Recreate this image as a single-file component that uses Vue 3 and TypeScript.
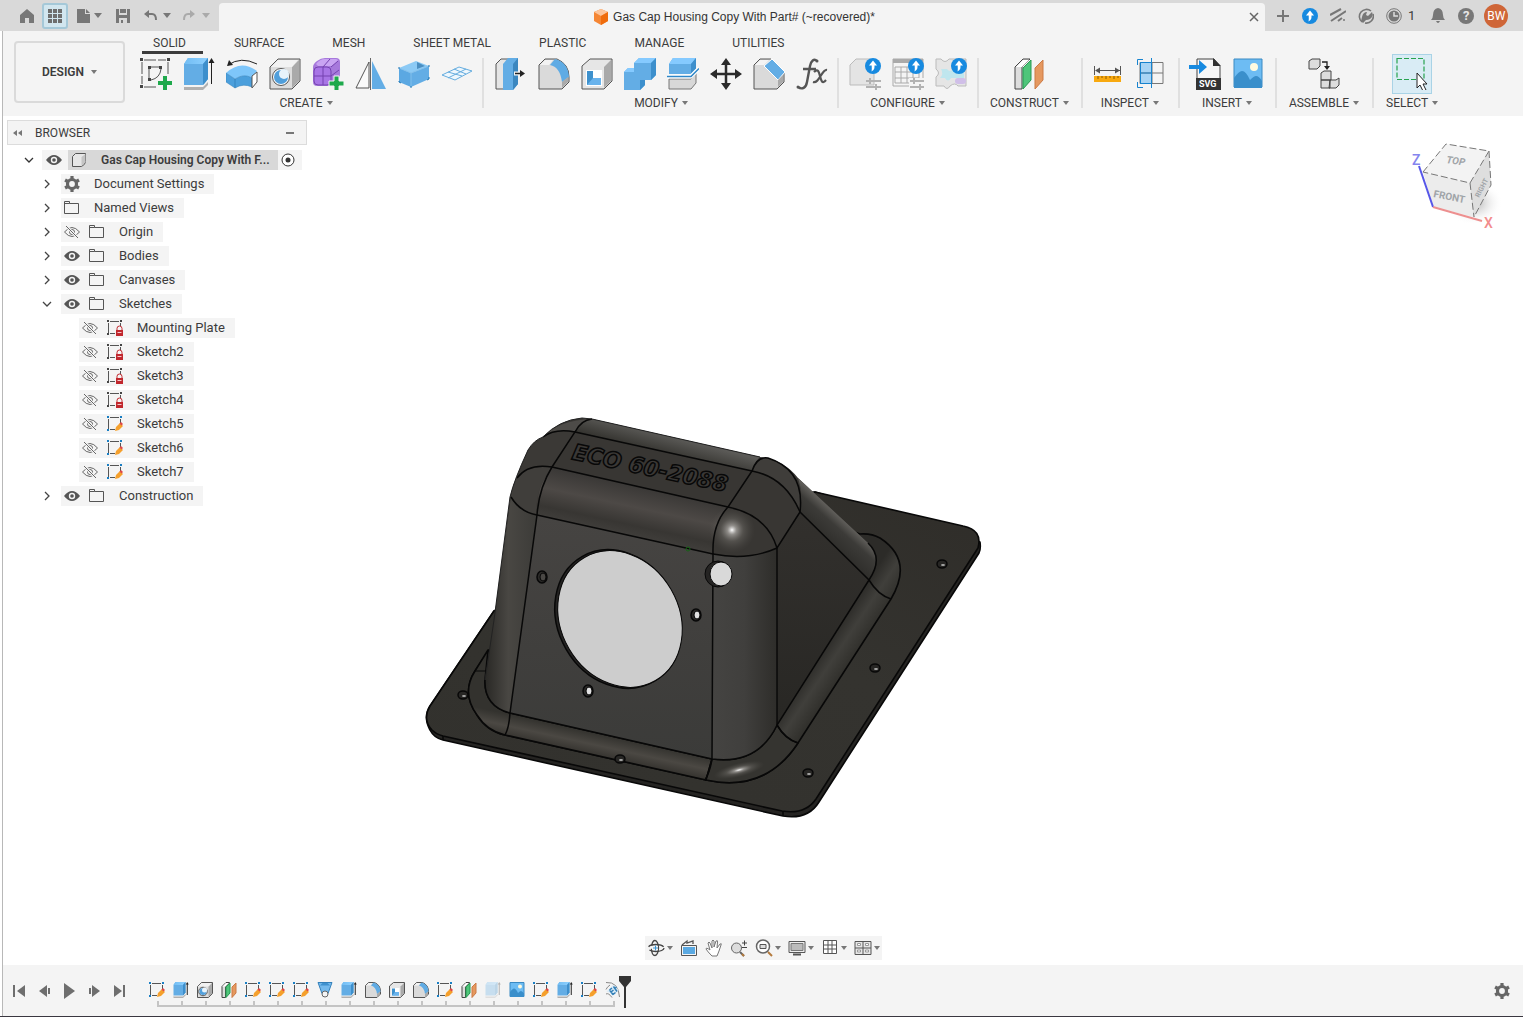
<script setup lang="ts">
import { ref } from 'vue'

interface Group { name: string; icons: string[]; cls: string }
interface Node { label: string; level: number; icon: string; eye: '' | 'eye' | 'eye-off'; open?: boolean }

const tabs = ['SOLID', 'SURFACE', 'MESH', 'SHEET METAL', 'PLASTIC', 'MANAGE', 'UTILITIES']
const activeTab = ref('SOLID')

const groups: Group[] = [
  { name: 'CREATE', cls: 'wide', icons: ['sketch', 'extrude', 'revolve', 'hole', 'form', 'mirror', 'derive', 'pattern'] },
  { name: 'MODIFY', cls: 'wide', icons: ['presspull', 'fillet', 'shell', 'combine', 'split', 'move', 'chamfer', 'fx'] },
  { name: 'CONFIGURE', cls: '', icons: ['config-body', 'config-table', 'config-theme'] },
  { name: 'CONSTRUCT', cls: '', icons: ['plane'] },
  { name: 'INSPECT', cls: '', icons: ['measure', 'section'] },
  { name: 'INSERT', cls: '', icons: ['svg-insert', 'canvas'] },
  { name: 'ASSEMBLE', cls: 'roomy', icons: ['assemble'] },
  { name: 'SELECT', cls: 'roomy select', icons: ['select'] },
]

const nodes: Node[] = [
  { label: 'Document Settings', level: 1, icon: 'gear', eye: '' },
  { label: 'Named Views', level: 1, icon: 'folder', eye: '' },
  { label: 'Origin', level: 1, icon: 'folder', eye: 'eye-off' },
  { label: 'Bodies', level: 1, icon: 'folder', eye: 'eye' },
  { label: 'Canvases', level: 1, icon: 'folder', eye: 'eye' },
  { label: 'Sketches', level: 1, icon: 'folder', eye: 'eye', open: true },
  { label: 'Mounting Plate', level: 2, icon: 'sketch-lock', eye: 'eye-off' },
  { label: 'Sketch2', level: 2, icon: 'sketch-lock', eye: 'eye-off' },
  { label: 'Sketch3', level: 2, icon: 'sketch-lock', eye: 'eye-off' },
  { label: 'Sketch4', level: 2, icon: 'sketch-lock', eye: 'eye-off' },
  { label: 'Sketch5', level: 2, icon: 'sketch-edit', eye: 'eye-off' },
  { label: 'Sketch6', level: 2, icon: 'sketch-edit', eye: 'eye-off' },
  { label: 'Sketch7', level: 2, icon: 'sketch-edit', eye: 'eye-off' },
  { label: 'Construction', level: 1, icon: 'folder', eye: 'eye' },
]

const navTools = [
  { icon: 'orbit', menu: true }, { icon: 'lookat', menu: false }, { icon: 'pan', menu: false },
  { icon: 'zoom', menu: false }, { icon: 'fit', menu: true }, { icon: 'display', menu: true },
  { icon: 'grid', menu: true }, { icon: 'views', menu: true },
]

const playback = ['first', 'prev', 'play', 'next', 'last']
const history = [
  'sketch-edit', 'extrude', 'hole', 'plane', 'sketch-edit', 'sketch-edit', 'sketch-edit', 'loft', 'extrude', 'fillet',
  'shell', 'fillet', 'sketch-edit', 'plane', 'extrude', 'canvas', 'sketch-edit', 'extrude', 'sketch-edit', 'emboss',
]
const suppressed = 14
const plateHoles = [[463, 695], [620, 759], [808, 773], [875, 668], [942, 564]]
const faceHoles = [[542, 577], [696, 615], [588, 691]]
</script>

<template>
  <div class="app">
    <svg class="defs" width="0" height="0" aria-hidden="true">
      <defs>
        <linearGradient id="gCorner" x1="0" x2="1"><stop offset="0" stop-color="#454442" /><stop offset=".5" stop-color="#403f3d" /><stop offset="1" stop-color="#2e2d2a" /></linearGradient>
        <linearGradient id="gLeft" x1="0" x2="1"><stop offset="0" stop-color="#292825" /><stop offset=".45" stop-color="#494743" /><stop offset="1" stop-color="#3c3b38" /></linearGradient>
        <linearGradient id="gFront" x1="0" y1="0" x2="0" y2="1"><stop offset="0" stop-color="#464442" /><stop offset="1" stop-color="#3b3b39" /></linearGradient>
        <linearGradient id="gEdge" gradientUnits="userSpaceOnUse" x1="640" y1="487" x2="629" y2="538"><stop offset="0" stop-color="#3a3836" /><stop offset=".4" stop-color="#4d4946" /><stop offset=".75" stop-color="#383633" /><stop offset="1" stop-color="#413f3c" /></linearGradient>
        <linearGradient id="gBack" gradientUnits="userSpaceOnUse" x1="670" y1="436" x2="665" y2="455"><stop offset="0" stop-color="#5b5a57" /><stop offset="1" stop-color="#34332f" /></linearGradient>
        <linearGradient id="gRing" gradientUnits="userSpaceOnUse" x1="614" y1="737" x2="609" y2="760"><stop offset="0" stop-color="#33322e" /><stop offset=".5" stop-color="#4b4843" /><stop offset="1" stop-color="#33312d" /></linearGradient>
        <linearGradient id="gRingR" gradientUnits="userSpaceOnUse" x1="815" y1="660" x2="845" y2="680"><stop offset="0" stop-color="#2c2b28" /><stop offset=".4" stop-color="#403f3b" /><stop offset="1" stop-color="#2c2b27" /></linearGradient>
        <linearGradient id="gSlope" gradientUnits="userSpaceOnUse" x1="827" y1="540" x2="845" y2="520"><stop offset="0" stop-color="#302f2c" /><stop offset=".6" stop-color="#3c3b38" /><stop offset="1" stop-color="#64625e" /></linearGradient>
        <linearGradient id="gSide" x1="0" y1="0" x2="0" y2="1"><stop offset="0" stop-color="#32302d" /><stop offset="1" stop-color="#282724" /></linearGradient>
        <linearGradient id="gPlate" x1="0" y1="1" x2="1" y2="0"><stop offset="0" stop-color="#32312d" /><stop offset=".6" stop-color="#34332f" /><stop offset="1" stop-color="#2f2d29" /></linearGradient>
        <radialGradient id="gSpec"><stop offset="0" stop-color="#fff" /><stop offset=".2" stop-color="#b5b2ae" stop-opacity=".7" /><stop offset=".5" stop-color="#7a7772" stop-opacity=".4" /><stop offset="1" stop-color="#55524e" stop-opacity="0" /></radialGradient>
        <radialGradient id="gShadow"><stop offset="0" stop-color="#999" stop-opacity=".8" /><stop offset="1" stop-color="#fff" stop-opacity="0" /></radialGradient>
        <linearGradient id="gBlueTop" x1="0" x2="1"><stop offset="0" stop-color="#72bdf3" /><stop offset="1" stop-color="#8dd0ff" /></linearGradient>
      </defs>

      <symbol id="i-sketch" viewBox="0 0 32 32"><path d="M2 4v22M4 2h22M28 4v13M4 29h12" fill="none" stroke="#555" stroke-dasharray="12 2" /><path d="M9 9h12M9 9v13M21 11q-1 9-10 11" fill="none" stroke="#555" /><path d="M0 0h3v3H0zM27 0h3v3h-3zM0 27h3v3H0zM8 8h3v3H8zM19 8h3v3h-3zM8 20h3v3H8z" fill="#444" /><path d="M23 18h4v5h5v4h-5v5h-4v-5h-5v-4h5z" fill="#1fa94c" /></symbol>
      <symbol id="i-extrude" viewBox="0 0 32 32"><path d="M1 32v-4l5-5h19v4l-5 5z" fill="#b0b0b0" /><path d="M1 26h20l4-5v3l-5 5H1z" fill="#f4f4f4" /><path d="M1 6l4-6h20v21l-5 6H1z" fill="#63ade5" /><path d="M1 6l4-6h20l-5 6z" fill="url(#gBlueTop)" /><path d="M20 6l5-6v21l-5 6z" fill="#3d8fcc" /><path d="M28.500 4v22" stroke="#222" /><path d="M28.500 0l3 5h-6z" fill="#222" /></symbol>
      <symbol id="i-revolve" viewBox="0 0 32 32"><path d="M0 15q15-14 31-2l-5 7q-9-5-17 1z" fill="#7ec6fa" /><path d="M0 15l9 6v9l-9-6zM9 21q9-6 17-1v9q-9-4-17 1z" fill="#4b9fdc" stroke="#3380bb" stroke-width=".5" /><path d="M26 18l5-4v10l-5 6z" fill="#fff" stroke="#555" /><path d="M2 7q13-9 29-1" fill="none" stroke="#222" /><path d="M1 8l2-6 4 5z" fill="#222" /></symbol>
      <symbol id="i-hole" viewBox="0 0 32 32"><path d="M1 9l8-8h22v22l-8 8H1z" fill="#ddd" stroke="#555" /><path d="M23 9l7-7v21l-7 7z" fill="#aaa" /><path d="M2 9l7-7h20l-6 7z" fill="#f2f2f2" /><circle cx="12" cy="19" r="8.500" fill="#fff" stroke="#555" /><circle cx="12" cy="19" r="7" fill="#519fdb" /><circle cx="15" cy="16" r="5" fill="#e8f3fb" /></symbol>
      <symbol id="i-form" viewBox="0 0 32 32"><path d="M1 9q0-3 4-6t8-3h11q4 0 4 4v12q0 4-4 8t-8 4H5q-4 0-4-4z" fill="#a779dc" /><path d="M4 6q4-5 9-5h11q2 0 2 2l-6 5H6z" fill="#c9a4f2" /><rect x="2" y="9" width="17" height="18" rx="4" fill="#a875e6" stroke="#7543b0" /><path d="M11 9v18M2 18h17M11 9l7-8M19 18l8-6M19 9l7-6" fill="none" stroke="#7543b0" /><path d="M22 18h5v5h5v5h-5v5h-5v-5h-5v-5h5z" fill="#1fa94c" stroke="#f4f4f4" /></symbol>
      <symbol id="i-mirror" viewBox="0 0 32 32"><path d="M14 4v26H1z" fill="#fafafa" stroke="#555" /><path d="M17 3v28h14z" fill="#63ade5" /><path d="M15.500 0v32" stroke="#666" /></symbol>
      <symbol id="i-derive" viewBox="0 0 32 32"><path d="M1 10L18 3l13 5-18 7z" fill="#8ccaf5" /><path d="M19 4v7l8-3z" fill="#4b8fc2" /><path d="M1 10l12 5v14L1 24z" fill="#5ba8e2" /><path d="M13 15l18-7v13l-18 8z" fill="#63ade5" /><path d="M1 10l12 5v14M13 15l18-7" fill="none" stroke="#82c0ec" /><path d="M1 23v1l2 1M31 19v2l-2 1M12 29h2M0 10h2M30 8h2" stroke="#1f76b5" fill="none" /></symbol>
      <symbol id="i-pattern" viewBox="0 0 32 32"><path d="M1 17L18 9l13 4-17 9zM7 14l14 4M13 11l12 5M7 20L25 11M20 19" fill="#eef7fd" stroke="#66addf" /></symbol>
      <symbol id="i-presspull" viewBox="0 0 32 32"><path d="M1 6l5-5h8v25l-5 5H1z" fill="#e5e5e5" stroke="#555" /><path d="M8 6l5-6h10v26l-5 6H8z" fill="#63ade5" /><path d="M18 6l5-6v26l-5 6z" fill="#3b87c0" /><path d="M19 15.500h8" stroke="#f4f4f4" stroke-width="4" /><path d="M20 15.500h7" stroke="#222" stroke-width="1.500" /><path d="M25 12l5 3.500-5 3.500z" fill="#222" /></symbol>
      <symbol id="i-fillet" viewBox="0 0 32 32"><path d="M1 7l6-6h12q12 5 12 18v5l-7 7H1z" fill="#dadada" stroke="#555" /><path d="M12 7l5-6q13 3 14 18l-7 5Q22 9 12 7z" fill="#5fabe4" /><path d="M24 24l6-5v5l-6 6z" fill="#aaa" /><path d="M2 7l5-5h8l-4 5z" fill="#f2f2f2" /></symbol>
      <symbol id="i-shell" viewBox="0 0 32 32"><path d="M1 8l8-7h22v22l-8 8H1z" fill="#e6e6e6" stroke="#555" /><path d="M23 9l7-7v21l-7 7z" fill="#aaa" /><path d="M5 12h16v16H5z" fill="#fff" /><path d="M6 13v14h14l-5-7h-3v-7z" fill="#3e91cd" /><path d="M12 20h8v7h-8z" fill="#9fd2f7" /><path d="M6 27l6-7h8v7z" fill="#69b3ec" /></symbol>
      <symbol id="i-combine" viewBox="0 0 32 32"><path d="M0 32V14l4-4h6V5l5-5h17v17l-5 5h-6v5l-5 5z" fill="#63ade5" /><path d="M10 5l5-5h17l-5 5zM0 14l4-4h6v4z" fill="#85caff" /><path d="M27 5l5-5v17l-5 5zM16 22h5v5l-5 5z" fill="#3d8fcc" /></symbol>
      <symbol id="i-split" viewBox="0 0 32 32"><path d="M2 6l4-6h23v10l-5 6H2z" fill="#63ade5" /><path d="M2 6l4-6h23l-5 6z" fill="#85caff" /><path d="M24 6l5-6v11l-5 5z" fill="#3d8fcc" /><path d="M2 21h22l5-6v10l-5 6H2z" fill="#d8d8d8" stroke="#777" /><path d="M0 18.500h24l8-8" stroke="#fff" stroke-width="4" fill="none" /><path d="M0 18.500h24l8-8" stroke="#2e86c7" fill="none" stroke-width="1.500" /></symbol>
      <symbol id="i-move" viewBox="0 0 32 32"><path d="M16 4v24M4 16h24" stroke="#2b2b2b" stroke-width="2.500" /><path d="M16 0l5 7H11zM16 32l5-7H11zM0 16l7-5v10zM32 16l-7-5v10z" fill="#2b2b2b" /></symbol>
      <symbol id="i-chamfer" viewBox="0 0 32 32"><path d="M1 7l6-6h11l13 14v9l-7 7H1z" fill="#dadada" stroke="#555" /><path d="M11 8l8-7 13 13-7 8z" fill="#63ade5" stroke="#fff" /><path d="M25 22l5-5v7l-5 5z" fill="#aaa" /><path d="M2 7l5-5h9l-5 5z" fill="#f4f4f4" /></symbol>
      <symbol id="i-fx" viewBox="0 0 32 32"><path d="M21 3c-3-3-6 0-7 5l-3 16c-1 6-5 8-9 5M7 11h13" fill="none" stroke="#555" stroke-width="2.400" /><circle cx="21" cy="3" r="1.500" fill="#555" /><circle cx="2" cy="29" r="1.500" fill="#555" /><path d="M18 14c4-4 5 0 6 4s2 9 6 4M31 12c-5-1-8 14-14 12" fill="none" stroke="#555" stroke-width="2.200" /></symbol>
      <symbol id="i-badge" viewBox="0 0 16 16"><circle cx="8" cy="8" r="8" fill="#178ae0" /><path d="M8 2.500l4 5H9.500c0 3 0 4-3 6 .5-2 .2-4 .2-6H4z" fill="#fff" /></symbol>
      <symbol id="i-config-body" viewBox="0 0 32 32"><path d="M1 7l6-6h14l4 9v17H1z" fill="#e4e4e4" stroke="#bbb" /><path d="M17 23h15M17 29h15M21 20v6M27 26v6" stroke="#b2b2b2" stroke-width="2" /><use href="#i-badge" x="16" y="0" width="16" height="16" /></symbol>
      <symbol id="i-config-table" viewBox="0 0 32 32"><path d="M1 1h30v4H1z" fill="#aaa" /><path d="M1 1h30v27H1zM3 9h24v16H3zM3 14h24M3 20h24M9 9v16M15 9v16M21 9v16" fill="none" stroke="#aaa" /><path d="M17 20h15v10H17z" fill="#f4f4f4" /><path d="M18 23h14M18 29h14M22 20v6M28 26v6" stroke="#b2b2b2" stroke-width="2" /><use href="#i-badge" x="16" y="0" width="16" height="16" /></symbol>
      <symbol id="i-config-theme" viewBox="0 0 32 32"><path d="M1 1h5q4 5 8 0h17v27h-8q-3-4-8 0-3 5-6 0H1v-9q5-4 0-8z" fill="#e5e5e5" stroke="#bbb" /><path d="M6 11h6q3 4 6 0h11v9H16q-3 5-6 0H5q4-4 1-9z" fill="#bfe6ee" /><rect x="20" y="20" width="11" height="6" rx="3" fill="#d0bfe8" /><use href="#i-badge" x="16" y="0" width="16" height="16" /></symbol>
      <symbol id="i-plane" viewBox="0 0 32 32"><path d="M2 9l8-8h7L9 9v22H2z" fill="#ddd" stroke="#444" /><path d="M3 9l7-7h6l-7 7z" fill="#fff" /><path d="M10 10l8-8v20l-8 9z" fill="#4fc57a" stroke="#279a52" /><path d="M22 10l8-8v20l-8 9z" fill="#e5985f" stroke="#cc7a45" /></symbol>
      <symbol id="i-measure" viewBox="0 0 32 32"><path d="M2.500 8v9M28.500 8v9M4 12.500h24" stroke="#555" fill="none" /><path d="M3 12.500l5-3v6zM28 12.500l-5-3v6z" fill="#555" /><path d="M2 18h27v6H2z" fill="#f8a90f" /><path d="M6 18v3M10 18v2M14 18v3M18 18v2M22 18v3M26 18v2" stroke="#8c5a00" /></symbol>
      <symbol id="i-section" viewBox="0 0 32 32"><path d="M5 4h12v22H5z" fill="#a8d4f4" /><path d="M17 4.500h11v21H17M17 15h11M5 4.500h12v21H5zM5 15h12" fill="none" stroke="#777" /><path d="M5.500 4.500h11v21h-11zM5 15h12M16.500 0v30M2.500 7V1.500H8M2.500 24v5.500H8" fill="none" stroke="#1683cf" /></symbol>
      <symbol id="i-svg-insert" viewBox="0 0 32 32"><path d="M8 1h17l6 7v14H8z" fill="#f7f7f7" stroke="#444" /><path d="M24 0l8 8h-8z" fill="#333" /><path d="M7 20h25v12H7z" fill="#333" /><path d="M0 7h10V2l8 7-8 7v-5H0z" fill="#178ae0" /></symbol>
      <symbol id="i-canvas" viewBox="0 0 32 32"><path d="M2 1h28v28H2z" fill="#6dbcf3" stroke="#3a8ac3" /><path d="M2 20q5-7 8-7 4 0 8 9 4-4 6-4 3 0 6 5v7H2z" fill="#3a8fcb" /><circle cx="22" cy="9" r="4" fill="#fffbe0" /></symbol>
      <symbol id="i-assemble" viewBox="0 0 32 32"><g fill="#ddd" stroke="#444"><path d="M1 3l3-2h8v7l-3 3H1zM13 15l3-2h7v9h-10zM22 22h6l3-2v7l-3 3h-7zM13 22h9v8h-9z" /></g><path d="M14 4h5v5" fill="none" stroke="#222" stroke-width="1.300" /><path d="M16 8h6l-3 4z" fill="#222" /></symbol>
      <symbol id="i-select" viewBox="0 0 32 32"><rect x="1" y="0.500" width="27" height="21" fill="none" stroke="#27a34f" stroke-dasharray="5 2" stroke-width="1.200" /><path d="M21 15v15l3-3 3 6 3-1-3-6h4z" fill="#fff" stroke="#222" /></symbol>
      <symbol id="i-loft" viewBox="0 0 32 32"><path d="M2 1h28l-8 22H10z" fill="#74b9ec" stroke="#3380bb" /><path d="M6 7h20l-5-5H11z" fill="#3f91ce" /><circle cx="16" cy="24" r="6" fill="#f4f4f4" stroke="#666" /></symbol>
      <symbol id="i-emboss" viewBox="0 0 32 32"><path d="M2 1q25-2 27 29M10 6q-6 4-8 9M2 24q5-3 12 7" fill="none" stroke="#888" /><path d="M3 19L16 6q9 4 11 12L14 29q-2-8-11-10z" fill="#d9ebf7" /><path d="M9 16l7 9M9 16l5-4M12 20l5-4M16 25l5-4M17 9l7 10M19 14l4-4" fill="none" stroke="#337fb6" stroke-width="3" /></symbol>

      <symbol id="i-sketch-edit" viewBox="0 0 16 16"><path d="M1.500 3v10M3 1.500h9M13.500 3v5M3 13.500h5" fill="none" stroke="#555" /><path d="M0 0h2v2H0zM13 0h2v2h-2zM0 13h2v2H0z" fill="#1a7fc4" /><path d="M8 15l1-4 4-4 3 3-4 4z" fill="#f5a02c" /><path d="M12.500 7.500l1.500-1.500 2 2L14.500 9.500z" fill="#e04848" /></symbol>
      <symbol id="i-sketch-lock" viewBox="0 0 16 16"><path d="M1.500 3v10M3 1.500h9M13.500 3v3M3 13.500h5" fill="none" stroke="#555" /><path d="M0 0h2v2H0zM13 0h2v2h-2zM0 13h2v2H0z" fill="#444" /><path d="M10 11V8.500a2.500 2.500 0 015 0V11" fill="none" stroke="#c1272d" /><path d="M9 10h7v6H9z" fill="#c1272d" /><path d="M10.500 12.500h4" stroke="#f6c9cb" /></symbol>
      <symbol id="i-folder" viewBox="0 0 16 16"><path d="M.5 1.500h5v2h9v10H.5zM.5 3.500h5" fill="none" stroke="#555" /></symbol>
      <symbol id="i-body" viewBox="0 0 16 16"><path d="M1.500 4.500l3-3h10v8q0 3-4 5h-9z" fill="#e6e6e6" stroke="#555" /><path d="M10.500 5v9l4-4V2z" fill="#c4c4c4" /></symbol>
      <symbol id="i-gear" viewBox="0 0 16 16"><circle cx="8" cy="8" r="4.500" fill="none" stroke="#666" stroke-width="3.200" /><path d="M8 0v4M8 12v4M1.070 4l3.500 2M11.500 10l3.500 2M1.070 12l3.500-2M11.500 6l3.500-2" stroke="#666" stroke-width="3.200" /></symbol>
      <symbol id="i-eye" viewBox="0 0 16 16"><path d="M0 8q8-10 16 0-8 10-16 0z" fill="#555" /><circle cx="8" cy="8" r="3.200" fill="#f4f4f4" /><circle cx="8" cy="8" r="1.800" fill="#555" /></symbol>
      <symbol id="i-eye-off" viewBox="0 0 16 16"><path d="M.5 8q7.500-9 15 0-7.500 9-15 0z" fill="none" stroke="#666" /><circle cx="8" cy="8" r="2.500" fill="none" stroke="#666" /><path d="M2 2l12 12" stroke="#f4f4f4" stroke-width="2.500" /><path d="M2 2l12 12" stroke="#666" /></symbol>
      <symbol id="i-orbit" viewBox="0 0 18 18"><ellipse cx="8" cy="9" rx="3.500" ry="7.500" fill="none" stroke="#444" stroke-width="1.300" stroke-dasharray="17 3" /><ellipse cx="9" cy="9" rx="8" ry="3.500" fill="none" stroke="#444" stroke-width="1.300" stroke-dasharray="16 4" /><path d="M5 7h6v4H5z" fill="#f4f4f4" /><path d="M6 9h5M8.500 6.500v5" stroke="#3b93d1" /></symbol>
      <symbol id="i-lookat" viewBox="0 0 18 18"><path d="M1.500 6.500h15v10h-15z" fill="#f4f4f4" stroke="#555" /><path d="M3 8h12v7H3z" fill="#5aa9e2" /><path d="M2 6l5-4v2l6-2v3" fill="none" stroke="#555" stroke-width="1.300" /></symbol>
      <symbol id="i-pan" viewBox="0 0 18 18"><path d="M6 16Q3 13 1 10q0-2 4 1L3 4q1-2 2 0l2 5V2q1-2 2 0v6l2-6q2-1 1.500 1L12 9l3-4q2-1 1 1l-2 6-2 5H7z" fill="#fff" stroke="#777" /></symbol>
      <symbol id="i-zoom" viewBox="0 0 18 18"><circle cx="6.500" cy="9" r="5" fill="#ddd" stroke="#666" /><path d="M10 13l4 4" stroke="#666" stroke-width="2" /><path d="M12 15l2 2" stroke="#b47a3c" stroke-width="2" /><path d="M12 4h5M14.500 1.500v5M12 8.500h5" stroke="#444" /></symbol>
      <symbol id="i-fit" viewBox="0 0 18 18"><circle cx="8" cy="7.500" r="6.500" fill="#fff" stroke="#666" stroke-width="1.500" /><path d="M5 5.500h6v4H5z" fill="#ddd" stroke="#555" /><path d="M13 13l4 4" stroke="#b47a3c" stroke-width="2" /></symbol>
      <symbol id="i-display" viewBox="0 0 18 18"><path d="M1 2.500h16v11H1z" fill="#eee" stroke="#555" /><path d="M3 4.500h12v7H3z" fill="#bbb" stroke="#777" /><path d="M5 15.500h8" stroke="#555" stroke-width="2" /></symbol>
      <symbol id="i-grid" viewBox="0 0 18 18"><path d="M2.500 1.500h13v13h-13zM2.500 6h13M2.500 10h13M7 1.500v13M11 1.500v13" fill="#fff" stroke="#555" /></symbol>
      <symbol id="i-views" viewBox="0 0 18 18"><path d="M1 2.500h16v13H1zM9 2.500v13M1 9h16" fill="#e6e6e6" stroke="#555" /><path d="M3.500 4.500h3v2h-3zM11.500 4.500h3v2h-3zM3.500 11h3v2h-3zM11.500 11h3v2h-3z" fill="#fff" stroke="#999" /></symbol>
      <symbol id="i-first" viewBox="0 0 16 16"><path d="M2 2h2v12H2zM14 2v12L6 8z" fill="#6e6e6e" /></symbol>
      <symbol id="i-prev" viewBox="0 0 16 16"><path d="M11 2v12L3 8zM12 5h2v6h-2z" fill="#6e6e6e" /></symbol>
      <symbol id="i-play" viewBox="0 0 16 16"><path d="M3 0l11 8-11 8z" fill="#6e6e6e" /></symbol>
      <symbol id="i-next" viewBox="0 0 16 16"><path d="M6 2v12l8-6zM3 5h2v6H3z" fill="#6e6e6e" /></symbol>
      <symbol id="i-last" viewBox="0 0 16 16"><path d="M12 2h2v12h-2zM3 2v12l8-6z" fill="#6e6e6e" /></symbol>
    </svg>

    <header class="titlebar">
      <div class="quick">
        <button aria-label="Home"><svg width="16" height="16" viewBox="0 0 16 16"><path d="M8 1l7 6v8h-5v-5H6v5H1V7z" fill="#777" /></svg></button>
        <button class="apps" aria-label="Data panel"><svg width="16" height="16" viewBox="0 0 16 16"><path d="M1 1h4v4H1zM6 1h4v4H6zM11 1h4v4h-4zM1 6h4v4H1zM6 6h4v4H6zM11 6h4v4h-4zM1 11h4v4H1zM6 11h4v4H6zM11 11h4v4h-4z" fill="#6e6e6e" /></svg></button>
        <button class="file" aria-label="File"><svg width="14" height="16" viewBox="0 0 14 16"><path d="M0 1h8v5h5v9H0z M9 1l4 4H9z" fill="#777" /></svg><i class="caret"></i></button>
        <button class="save" aria-label="Save"><svg width="16" height="16" viewBox="0 0 16 16"><path d="M1 1h14v14H1z" fill="#777" /><path d="M4 1h8v6H4zM4 10h8v5H4z" fill="#d9d9d9" /><path d="M5 1h6v4H5zM6 12h2v3H6z" fill="#777" /></svg></button>
        <button class="undo" aria-label="Undo"><svg width="16" height="16" viewBox="0 0 16 16"><path d="M3 6h6q4 0 4 6" fill="none" stroke="#777" stroke-width="2" /><path d="M1 6l5-4v8z" fill="#777" /></svg><i class="caret"></i></button>
        <button class="redo" aria-label="Redo"><svg width="16" height="16" viewBox="0 0 16 16"><path d="M12 6H7q-4 0-4 6" fill="none" stroke="#aaa" stroke-width="2" /><path d="M14 6L9 2v8z" fill="#aaa" /></svg><i class="caret dim"></i></button>
      </div>
      <div class="doc-tab">
        <div class="doc-title">
          <svg width="16" height="16" viewBox="0 0 16 16"><path d="M8 0l7 3v9l-7 4-7-4V3z" fill="#f58634" /><path d="M8 0l7 3-7 4-7-4z" fill="#fcc59c" /><path d="M8 7l7-4v9l-7 4z" fill="#ef6c0c" /></svg>
          <span>Gas Cap Housing Copy With Part# (~recovered)*</span>
        </div>
        <button aria-label="Close document"><svg width="10" height="10" viewBox="0 0 10 10"><path d="M1 1l8 8M9 1L1 9" stroke="#666" stroke-width="1.500" /></svg></button>
      </div>
      <div class="status">
        <button aria-label="New document"><svg width="14" height="14" viewBox="0 0 14 14"><path d="M7 1v12M1 7h12" stroke="#777" stroke-width="2" /></svg></button>
        <button aria-label="Updates"><svg width="16" height="16"><use href="#i-badge" /></svg></button>
        <button aria-label="Extensions"><svg width="16" height="16" viewBox="0 0 16 16"><path d="M0 7l11-6M1 13L16 3M8 13l4-3" stroke="#777" stroke-width="2" fill="none" /><circle cx="14" cy="12" r="1" fill="#777" /></svg></button>
        <button aria-label="Online status"><svg width="16" height="16" viewBox="0 0 16 16"><path d="M4 14A7 7 0 1113 3M15 6a7 7 0 01-8 9" fill="none" stroke="#777" stroke-width="1.600" /><path d="M4 9q1-5 5-5l-1 3 2 1 4-4q2 4-2 7-2 1-4 1l-3 3-2-2z" fill="#777" /></svg></button>
        <button class="jobs" aria-label="Job status"><svg width="16" height="16" viewBox="0 0 16 16"><circle cx="8" cy="8" r="7.300" fill="none" stroke="#777" /><circle cx="8" cy="8" r="5.500" fill="#777" /><path d="M8 4v4h4" fill="none" stroke="#ddd" stroke-width="1.500" /></svg><span>1</span></button>
        <button aria-label="Notifications"><svg width="16" height="16" viewBox="0 0 16 16"><path d="M8 0q5 1 5 7 0 3 2 5H1q2-2 2-5 0-6 5-7zM6 13h4q-2 4-4 0z" fill="#777" /></svg></button>
        <button class="help" aria-label="Help">?</button>
        <button class="avatar" aria-label="Account">BW</button>
      </div>
    </header>

    <div class="ribbon">
      <button class="workspace">DESIGN<i class="caret"></i></button>
      <div class="ribbon-main">
        <nav class="tabs">
          <button v-for="t in tabs" :key="t" :class="{ active: t === activeTab }" @click="activeTab = t">{{ t }}</button>
        </nav>
        <div class="groups">
          <section v-for="g in groups" :key="g.name" class="group" :class="g.cls">
            <div class="tools">
              <button v-for="i in g.icons" :key="i" :aria-label="i">
                <svg width="32" height="32"><use :href="'#i-' + i" /><text v-if="i === 'svg-insert'" class="svg-tag" x="10" y="29">SVG</text></svg>
              </button>
            </div>
            <button class="group-name">{{ g.name }}<i class="caret"></i></button>
          </section>
        </div>
      </div>
    </div>

    <main class="viewport">
      <svg class="model" width="570" height="415" viewBox="420 410 570 415" role="img" aria-label="Gas cap housing model">
        <g stroke="#080808" stroke-width="1.600" stroke-linejoin="round">
          <path d="M494 611L430 706Q423 717 430 730Q434 738 443 740L783 816Q808 820 819 802L979 553Q981 549 980 542L815 492z" fill="#252422" />
          <path d="M494 611L430 706Q422 719 432 730Q436 734 443 736L782 811Q805 815 816 799L978 548Q983 530 963 526L815 492L700 500z" fill="url(#gPlate)" />
          <path d="M443 736v4M783 811v5" />
          <path d="M489 650L475 671Q461 693 477 715Q487 731 505 735L706 780Q765 793 798 743L891 599Q914 560 880 538Q871 533 860 534L800 512z" fill="url(#gRingR)" />
          <path d="M488 650L475 671Q461 693 477 715Q487 731 505 735L706 780L712 759L510 713Q484 706 485 680z" fill="url(#gRing)" />
          <path d="M706 780Q765 793 798 743Q785 739 777 725Q758 765 712 759z" fill="#353430" />
        </g>
        <ellipse cx="739" cy="770" rx="26" ry="7" fill="url(#gSpec)" transform="rotate(-14 739 770)" />
        <path d="M475 671h11" stroke="#080808" />
        <path d="M485 680L494 620L510 497Q514 480 528 450Q534 440 543 437Q559 420 582 418L592 419L760 457Q784 460 798 478L868 543Q884 558 869 580L777 725Q758 765 712 759L510 713Q484 706 485 680z" fill="#383633" />
        <path d="M485 680L494 620L511 497Q520 512 537 515L510 713Q484 706 485 680z" fill="url(#gLeft)" />
        <path d="M537 515L713 554L712 759L510 713z" fill="url(#gFront)" />
        <path d="M713 554Q748 561 777 548L776 725Q758 765 712 759z" fill="url(#gCorner)" />
        <path d="M777 548L800 512L869 580L777 725z" fill="url(#gSide)" />
        <path d="M552 467L728 507Q712 524 713 554L537 515Q534 490 552 467z" fill="url(#gEdge)" />
        <path d="M511 497Q513 464 552 467Q534 490 537 515Q520 512 511 497z" fill="#403e3b" />
        <path d="M543 437Q555 428 575 432L552 467Q528 464 517 478L528 450z" fill="#3b3936" />
        <path d="M575 432Q581 420 592 419L760 457Q755 461 752 471z" fill="url(#gBack)" />
        <path d="M543 437Q559 420 592 419Q581 420 575 432Q555 428 543 437z" fill="#4d4b48" />
        <path d="M752 471Q757 456 768 458Q805 470 800 512Q785 475 752 471z" fill="#3f3d3a" />
        <path d="M798 478L868 543Q884 558 869 580L800 512Q804 495 798 478z" fill="url(#gSlope)" />
        <circle cx="732" cy="530" r="23" fill="url(#gSpec)" />
        <g fill="none" stroke="#080808" stroke-width="1.500">
          <path d="M543 437Q555 428 575 432L752 471Q785 477 800 512" />
          <path d="M517 478Q528 463 552 467L728 507Q767 515 777 548L800 512" />
          <path d="M511 497Q520 512 537 515L713 554Q748 561 777 548V725" />
          <path d="M592 419Q581 420 575 432L552 467Q539 488 537 515L510 713Q509 728 505 735" />
          <path d="M752 471L728 507Q712 524 713 554L712 759Q710 772 705 780" />
          <path d="M752 471Q757 456 768 458Q805 470 800 512L869 580Q878 595 891 599" />
          <path d="M868 543Q884 558 869 580L777 725Q758 765 712 759L510 713Q484 706 485 680M777 725Q785 739 798 743" />
          <path d="M485 680L494 620L510 497Q514 480 528 450Q534 440 543 437Q559 420 582 418L592 419L760 457" stroke="#222" stroke-width="1" />
        </g>
        <ellipse cx="618" cy="619" rx="72" ry="60" transform="rotate(60 618 619)" fill="#252423" stroke="#080808" stroke-width="1.500" />
        <ellipse cx="620" cy="619" rx="71" ry="59" transform="rotate(60 620 619)" fill="#cdcdcd" stroke="#080808" />
        <circle cx="718" cy="574" r="13" fill="#252423" stroke="#080808" />
        <ellipse cx="721" cy="574" rx="11" ry="12" fill="#d9d9d9" stroke="#080808" />
        <g v-for="(h, n) in faceHoles" :key="'f' + n">
          <ellipse :cx="h[0]" :cy="h[1]" rx="5" ry="6" fill="#2a2927" stroke="#080808" stroke-width="1.500" />
          <ellipse :cx="h[0] + 1" :cy="h[1]" rx="3" ry="4" :fill="n ? '#e2e2e2' : '#4a4845'" stroke="#080808" />
        </g>
        <g v-for="(h, n) in plateHoles" :key="'p' + n">
          <ellipse :cx="h[0]" :cy="h[1]" rx="5" ry="4" fill="#272624" stroke="#080808" stroke-width="1.500" />
          <ellipse :cx="h[0] + 1" :cy="h[1] + 1" rx="2" ry="1" fill="#aaa" />
        </g>
        <circle cx="688" cy="549" r="2" fill="none" stroke="#146414" />
        <text class="engraving" x="571" y="459" transform="rotate(12 571 459)">ECO 60-2088</text>
      </svg>

      <aside class="browser">
        <div class="browser-head">
          <button aria-label="Collapse panel"><svg width="9" height="6" viewBox="0 0 9 6"><path d="M4 0v6L0 3zM9 0v6L5 3z" fill="#777" /></svg></button>
          <h2>BROWSER</h2>
          <button aria-label="Minimize"><svg width="10" height="10" viewBox="0 0 10 10"><path d="M1 4h8v2H1z" fill="#777" /></svg></button>
        </div>
        <ul class="tree">
          <li class="root">
            <button class="chev" aria-label="Collapse"><svg width="10" height="10" viewBox="0 0 10 10"><path d="M1 3l4 4 4-4" fill="none" stroke="#333" stroke-width="1.300" /></svg></button>
            <div class="chip">
              <svg width="16" height="16"><use href="#i-eye" /></svg>
              <div class="root-name"><svg width="16" height="16"><use href="#i-body" /></svg><span>Gas Cap Housing Copy With F...</span></div>
              <svg width="14" height="14" viewBox="0 0 14 14"><circle cx="7" cy="7" r="6" fill="#fff" stroke="#333" /><circle cx="7" cy="7" r="2.500" fill="#333" /></svg>
            </div>
          </li>
          <li v-for="n in nodes" :key="n.label" :class="'level' + n.level">
            <button v-if="n.level === 1" class="chev" aria-label="Toggle"><svg width="10" height="10" viewBox="0 0 10 10"><path :d="n.open ? 'M1 3l4 4 4-4' : 'M3 1l4 4-4 4'" fill="none" stroke="#444" stroke-width="1.300" /></svg></button>
            <div class="chip">
              <svg v-if="n.eye" width="16" height="16"><use :href="'#i-' + n.eye" /></svg>
              <svg width="16" height="16"><use :href="'#i-' + n.icon" /></svg>
              <span>{{ n.label }}</span>
            </div>
          </li>
        </ul>
      </aside>

      <svg class="cube" width="100" height="100" viewBox="1405 140 100 100" role="img" aria-label="View cube">
        <ellipse cx="1474" cy="203" rx="29" ry="22" fill="url(#gShadow)" />
        <path d="M1423 172L1446 144L1489 151L1470 183z" fill="#f3f3f3" />
        <path d="M1423 172L1470 183L1474 217L1433 207z" fill="#ececec" />
        <path d="M1470 183L1489 151L1491 185L1474 217z" fill="#dedede" />
        <path d="M1423 172L1446 144L1489 151L1470 183zM1470 183L1474 217M1489 151L1491 185L1474 217" fill="none" stroke="#777" stroke-dasharray="7 3" />
        <path d="M1419 166L1433 207" stroke="#5656e8" stroke-width="2" />
        <path d="M1433 207L1482 221" stroke="#ed8f8f" stroke-width="2" />
        <g font-family="Roboto, sans-serif" font-weight="700" fill="#a0a4a8">
          <text x="1446" y="163" font-size="10" font-style="italic" transform="rotate(8 1446 163)">TOP</text>
          <text x="1433" y="197" font-size="10" transform="rotate(11 1433 197)">FRONT</text>
          <text x="1479" y="198" font-size="7" transform="rotate(-62 1479 198)">RIGHT</text>
        </g>
        <text x="1412" y="165" class="axis" fill="#8585ee">Z</text>
        <text x="1484" y="228" class="axis" fill="#f28c8c">X</text>
      </svg>

      <div class="navbar">
        <button v-for="t in navTools" :key="t.icon" :aria-label="t.icon"><svg width="18" height="18"><use :href="'#i-' + t.icon" /></svg><i v-if="t.menu" class="caret"></i></button>
      </div>
    </main>

    <footer class="timeline">
      <div class="playback">
        <button v-for="p in playback" :key="p" :aria-label="p"><svg width="16" height="16"><use :href="'#i-' + p" /></svg></button>
      </div>
      <ol class="history">
        <li v-for="(h, n) in history" :key="n"><button :class="{ off: n === suppressed }" :aria-label="h"><svg width="16" height="16" :stroke-width="h === 'sketch-edit' ? 1 : 2"><use :href="'#i-' + h" /></svg></button></li>
      </ol>
      <svg class="marker" width="14" height="32" viewBox="0 0 14 32"><path d="M1 0h12v5L8 11v21H6V11L1 5z" fill="#333" /></svg>
      <button class="settings" aria-label="Timeline settings"><svg width="16" height="16"><use href="#i-gear" /></svg></button>
    </footer>
  </div>
</template>

<style>
body { margin: 0; }
</style>

<style scoped>
.app {
  box-sizing: border-box;
  min-height: 100vh;
  display: flex;
  flex-direction: column;
  background: #fff;
  border-bottom: 1px solid #3a3740;
  font: 13px/16px Roboto, "Noto Sans", sans-serif;
  color: #3c3c3c;
}
.defs { position: absolute; }
svg { display: block; flex: none; }
button {
  display: flex;
  align-items: center;
  justify-content: center;
  padding: 0;
  border: 0;
  background: none;
  font: inherit;
  color: inherit;
}
.caret {
  width: 0;
  height: 0;
  border: 3px solid transparent;
  border-top: 4px solid #777;
  border-bottom: 0;
}
.titlebar { display: flex; height: 31px; background: #d9d9d9; }
.quick { display: flex; align-items: center; width: 219px; box-sizing: border-box; padding-left: 19px; }
.quick .caret { border-width: 4px; border-top-width: 5px; border-bottom-width: 0; }
.quick .dim { border-top-color: #aaa; }
.quick .apps { width: 26px; height: 26px; box-sizing: border-box; margin-left: 7px; border: 2px solid #a5c8d8; border-radius: 3px; background: #d2e6ef; }
.file { margin-left: 9px; gap: 3px; }
.save { margin-left: 13px; }
.undo { margin-left: 12px; gap: 4px; }
.redo { margin-left: 10px; gap: 5px; }
.doc-tab { flex: 1; display: flex; align-items: center; margin-top: 3px; padding-right: 6px; border-radius: 4px 4px 0 0; background: #f4f4f4; }
.doc-title { flex: 1; display: flex; justify-content: center; align-items: center; gap: 4px; font: 12px/16px "Liberation Sans", Arial, sans-serif; color: #333; }
.status { display: flex; align-items: center; gap: 12px; width: 258px; box-sizing: border-box; padding-left: 11px; }
.jobs { gap: 6px; margin-right: 3px; }
.help { width: 16px; height: 16px; border-radius: 50%; background: #777; color: #e6e6e6; font-weight: 700; }
.avatar { width: 24px; height: 24px; border-radius: 50%; background: #cf6638; color: #fff; font-size: 12px; margin-left: -2px; }

.ribbon { display: flex; height: 85px; margin-left: 2px; border-left: 1px solid #b8b8b8; background: #f4f4f4; font-size: 12px; }
.workspace { width: 111px; height: 62px; box-sizing: border-box; margin: 10px 0 0 11px; gap: 7px; border: 2px solid #dadada; border-radius: 4px; font-weight: 600; }
.ribbon-main { flex: 1; padding-left: 6px; }
.tabs { display: flex; gap: 20px; padding: 3px 0 0 11px; }
.tabs button { height: 20px; box-sizing: border-box; padding: 1px 17px 0 11px; border-bottom: 3px solid transparent; }
.tabs .active { border-color: #3c3c3c; }
.groups { display: flex; margin-top: 4px; }
.group { padding: 0 5px 0 4px; border-right: 2px solid #e0e0e0; height: 50px; }
.wide { padding: 0 4px 0 5px; }
.wide:first-child { padding-left: 3px; }
.tools { display: flex; justify-content: center; height: 32px; }
.tools button { width: 43px; }
.svg-tag { font: 700 9px Roboto, sans-serif; fill: #fff; }
.group-name { width: 100%; height: 26px; padding: 0 7px; box-sizing: border-box; gap: 4px; }
.roomy .group-name { padding: 0 8px; }
.select { border: 0; }
.select .tools button { width: 40px; height: 40px; box-sizing: border-box; margin-top: -4px; border: 1px solid #a9d3e6; background: #d9ecf5; }

.viewport { position: relative; flex: 1; display: flex; flex-direction: column; justify-content: space-between; margin-left: 2px; border-left: 1px solid #b8b8b8; }
.model { position: absolute; left: 417px; top: 294px; }
.engraving { font: italic 700 22px "DejaVu Sans", sans-serif; fill: #3a3836; stroke: #080808; stroke-width: 1.5; }
.cube { position: absolute; right: 18px; top: 24px; }
.axis { font: 500 14px Roboto, sans-serif; }
.browser { width: 300px; margin: 4px 0 0 4px; }
.browser-head { display: flex; align-items: center; height: 25px; box-sizing: border-box; padding: 0 11px 0 5px; border: 1px solid #dcdcdc; background: #f4f4f4; }
.browser-head h2 { flex: 1; margin: 0 0 0 13px; font: inherit; font-size: 12px; }
.tree { list-style: none; margin: 3px 0 0; padding: 0; }
.tree li { display: flex; align-items: center; height: 24px; }
.chev { width: 10px; height: 10px; }
.chip { display: flex; align-items: center; height: 20px; padding: 0 10px 0 3px; background: #f4f4f4; }
.chip svg + svg { margin-left: 9px; }
.chip > span { margin-left: 14px; }
.root { padding-left: 17px; }
.root .chip { margin-left: 8px; padding: 0 7px 0 4px; }
.root-name { display: flex; align-items: center; height: 20px; width: 210px; box-sizing: border-box; margin: 0 3px 0 6px; padding-left: 3px; gap: 14px; background: #d8d8d8; font-size: 12px; font-weight: 600; white-space: nowrap; }
.level1 { padding-left: 35px; }
.level1 .chip { margin-left: 9px; }
.level2 { padding-left: 72px; }
.navbar { align-self: center; display: flex; align-items: center; height: 24px; margin-bottom: 5px; padding: 0 2px; gap: 7px; background: #f4f4f4; }
.navbar button { gap: 2px; }

.timeline { display: flex; height: 51px; margin-left: 2px; border-left: 1px solid #b8b8b8; background: #f4f4f4; }
.playback { display: flex; gap: 9px; padding-left: 8px; }
.history { display: flex; list-style: none; margin: 14px 0 0 18px; padding: 0; height: 28px; }
.history li { position: relative; width: 24px; }
.history button { width: 24px; height: 22px; }
.history li::before { content: ""; position: absolute; left: 12px; bottom: 0; width: 24px; height: 6px; border-left: 2px solid #c4c4c4; border-bottom: 2px solid #c4c4c4; box-sizing: border-box; }
.history li:last-child::before { width: 2px; }
.off { opacity: .3; }
.marker { margin: 11px 0 0 -7px; }
.settings { margin-left: auto; margin-right: 13px; }
</style>
